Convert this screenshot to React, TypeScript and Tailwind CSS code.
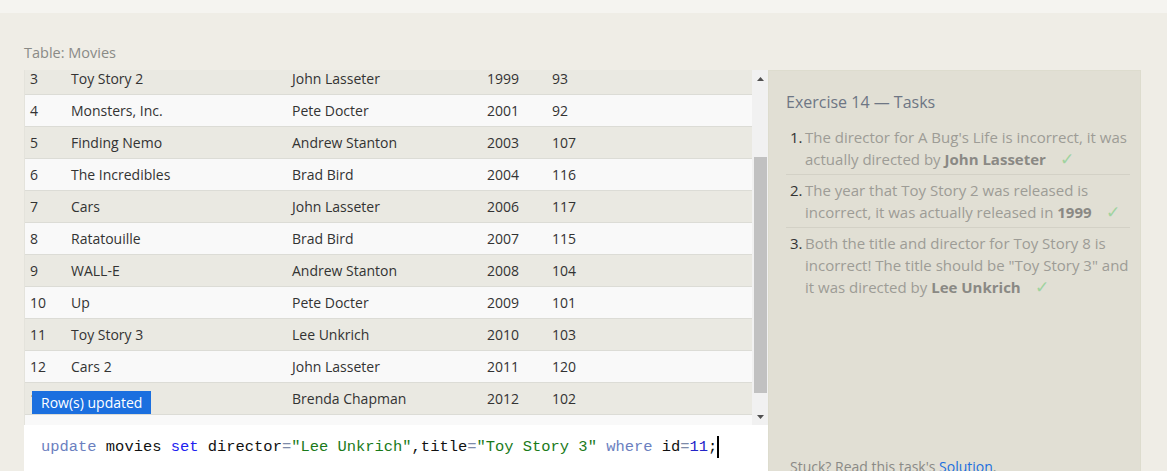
import React from "react"

interface Movie {
  id: number
  title: string
  director: string
  year: number
  length: number
}

const movies: Movie[] = [
  { id: 3, title: "Toy Story 2", director: "John Lasseter", year: 1999, length: 93 },
  { id: 4, title: "Monsters, Inc.", director: "Pete Docter", year: 2001, length: 92 },
  { id: 5, title: "Finding Nemo", director: "Andrew Stanton", year: 2003, length: 107 },
  { id: 6, title: "The Incredibles", director: "Brad Bird", year: 2004, length: 116 },
  { id: 7, title: "Cars", director: "John Lasseter", year: 2006, length: 117 },
  { id: 8, title: "Ratatouille", director: "Brad Bird", year: 2007, length: 115 },
  { id: 9, title: "WALL-E", director: "Andrew Stanton", year: 2008, length: 104 },
  { id: 10, title: "Up", director: "Pete Docter", year: 2009, length: 101 },
  { id: 11, title: "Toy Story 3", director: "Lee Unkrich", year: 2010, length: 103 },
  { id: 12, title: "Cars 2", director: "John Lasseter", year: 2011, length: 120 },
  { id: 13, title: "Brave", director: "Brenda Chapman", year: 2012, length: 102 },
  { id: 14, title: "Monsters University", director: "Dan Scanlon", year: 2013, length: 110 },
]

const Check = () => <span className="ml-[14px] text-[17px] leading-[20px] text-[#9fd39f]">✓</span>

export default function App() {
  return (
    <div className="h-[471px] overflow-hidden bg-[#efede6] font-['Open_Sans',sans-serif]">
      <div className="h-[13px] bg-[#f5f4f0]" />
      <div className="flex pl-6 pt-[29px]">
        <div className="w-[744px] flex flex-col">
          <div className="text-[14.5px] leading-[22px] text-[#8a8a86] mb-[6px]">Table: Movies</div>
          <div className="relative flex h-[355px] border-l border-[#e4e3dc]">
            <div className="flex-1 overflow-hidden">
              <div className="-mt-[7px]">
                {movies.map((m, i) => (
                  <div
                    key={m.id}
                    className={`flex h-[32px] items-center border-b border-[#dcdcd6] text-[14px] text-[#333] ${
                      i % 2 === 0 ? "bg-[#eae9e2]" : "bg-[#f9f9f9]"
                    }`}
                  >
                    <div className="w-[46px] pl-[5px]">{m.id}</div>
                    <div className="w-[221px]">{m.title}</div>
                    <div className="w-[195px]">{m.director}</div>
                    <div className="w-[65px]">{m.year}</div>
                    <div className="flex-1">{m.length}</div>
                  </div>
                ))}
              </div>
            </div>
            <div className="w-[16px] bg-[#f1f1f1] flex flex-col items-center">
              <div className="h-[17px] flex items-center justify-center">
                <svg width="7" height="4" viewBox="0 0 7 4"><path d="M0 4 L3.5 0 L7 4 Z" fill="#505050" /></svg>
              </div>
              <div className="h-[70px]" />
              <div className="w-[13px] h-[236px] bg-[#c1c1c1]" />
              <div className="flex-1" />
              <div className="h-[17px] flex items-center justify-center">
                <svg width="7" height="4" viewBox="0 0 7 4"><path d="M0 0 L3.5 4 L7 0 Z" fill="#505050" /></svg>
              </div>
            </div>
            <div className="absolute left-[7px] top-[321px] h-[23px] px-[9px] bg-[#1b6fdf] text-white text-[14px] leading-[23px]">
              Row(s) updated
            </div>
          </div>
          <div className="h-[60px] bg-white pl-[17px] pt-[10px] font-['Liberation_Mono',monospace] text-[15.45px] leading-[24px] text-[#111] whitespace-pre">
            <span className="text-[#6b7fbf]">update</span> movies <span className="text-[#2020f0]">set</span> director
            <span className="text-[#7d8aa8]">=</span>
            <span className="text-[#1a7a1a]">"Lee Unkrich"</span>,title
            <span className="text-[#7d8aa8]">=</span>
            <span className="text-[#1a7a1a]">"Toy Story 3"</span> <span className="text-[#6b7fbf]">where</span> id
            <span className="text-[#7d8aa8]">=</span>
            <span className="text-[#2424c8]">11</span>;<span className="inline-block w-[2px] h-[22px] bg-black align-middle" />
          </div>
        </div>
        <div className="mt-[28px] w-[373px] h-[420px] bg-[#e1dfd4] border border-[#dddcce] pl-[17px] pr-[10px] pt-[20px] flex flex-col">
          <div className="text-[16px] leading-[22px] text-[#6e7684] mb-[13px]">Exercise 14 — Tasks</div>
          <ol className="text-[15px] leading-[22px] text-[#9d9c96]">
            <li className="flex border-b border-[#d3d1c6] pb-[4px]">
              <span className="w-[19px] shrink-0 pl-[4px] text-[#333]">1.</span>
              <span>
                The director for A Bug's Life is incorrect, it was actually directed by{" "}
                <b className="text-[#8a8984]">John Lasseter</b>
                <Check />
              </span>
            </li>
            <li className="flex border-b border-[#d3d1c6] pt-[4px] pb-[4px]">
              <span className="w-[19px] shrink-0 pl-[4px] text-[#333]">2.</span>
              <span>
                The year that Toy Story 2 was released is incorrect, it was actually released in{" "}
                <b className="text-[#8a8984]">1999</b>
                <Check />
              </span>
            </li>
            <li className="flex pt-[4px]">
              <span className="w-[19px] shrink-0 pl-[4px] text-[#333]">3.</span>
              <span>
                Both the title and director for Toy Story 8 is incorrect! The title should be "Toy Story 3" and it was
                directed by <b className="text-[#8a8984]">Lee Unkrich</b>
                <Check />
              </span>
            </li>
          </ol>
          <div className="flex-1" />
          <div className="text-[14px] text-[#8a8a86] pl-[4px] pb-[12px]">
            Stuck? Read this task's <span className="text-[#1b6fdf]">Solution</span>.
          </div>
        </div>
      </div>
    </div>
  )
}
